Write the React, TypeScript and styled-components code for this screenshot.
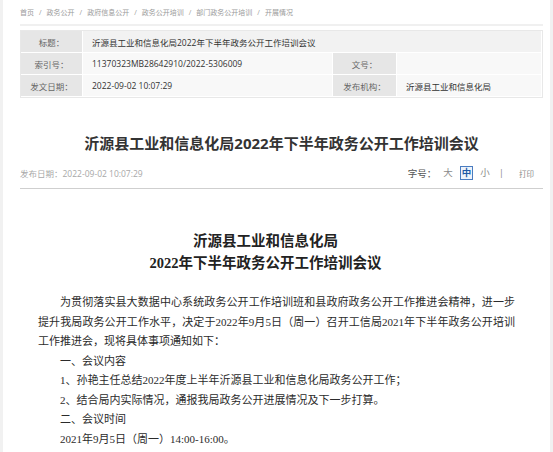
import React from 'react';
import styled, { createGlobalStyle } from 'styled-components';

const GlobalStyle = createGlobalStyle`
  html, body {
    margin: 0;
    padding: 0;
    background: #f1f1f1;
    font-family: 'Open Sans', 'Noto Sans CJK SC', sans-serif;
    color: #333;
  }
`;

const Page = styled.div`
  margin: 0 3px;
  background: #ffffff;
  padding: 0 7px 0 17px;
  height: 452px;
  overflow: hidden;
`;

const Crumbs = styled.nav`
  height: 24px;
  display: flex;
  align-items: center;
  border-bottom: 2px solid #f0f0f0;
  font-size: 7px;
  color: #9a9a9a;
`;

const Sep = styled.span`
  margin: 0 5px;
`;

const InfoTable = styled.div`
  margin-top: 4px;
  display: grid;
  grid-template-columns: 62px 1fr 64px 145px;
  border: 1px solid #e8e8e8;
  font-size: 8.5px;
`;

const Cell = styled.div<{ $label?: boolean; $span?: number; $shade?: boolean }>`
  height: 21px;
  display: flex;
  align-items: center;
  justify-content: ${(p) => (p.$label ? 'center' : 'flex-start')};
  padding: ${(p) => (p.$label ? '0' : '0 9px')};
  grid-column: ${(p) => (p.$span ? `span ${p.$span}` : 'auto')};
  background: ${(p) => (p.$label ? '#e6e6e6' : p.$shade ? '#f2f2f2' : '#f8f8f8')};
  color: ${(p) => (p.$label ? '#666' : '#333')};
  border-right: 1px solid #fff;
  border-bottom: 1px solid #fff;
  white-space: nowrap;
`;

const Headline = styled.h1`
  margin: 35px 0 0;
  text-align: center;
  font-size: 15px;
  line-height: 20px;
  font-weight: 700;
  color: #333;
`;

const MetaRow = styled.div`
  margin-top: 13px;
  padding-bottom: 8px;
  border-bottom: 1px solid #cfcfcf;
  display: flex;
  justify-content: space-between;
  align-items: center;
  height: 14px;
  font-size: 8.5px;
  color: #a8a8a8;
`;

const SizeTools = styled.div`
  display: flex;
  align-items: center;
  gap: 5px;
  padding-right: 9px;
  font-size: 9.5px;
`;

const ToolLabel = styled.span`
  color: #555;
`;

const SizeOpt = styled.span<{ $active?: boolean }>`
  color: ${(p) => (p.$active ? '#1f5aa6' : '#8a8a8a')};
  font-weight: ${(p) => (p.$active ? 700 : 400)};
  border: 1px solid ${(p) => (p.$active ? '#4a7cc0' : 'transparent')};
  background: ${(p) => (p.$active ? '#edf3fb' : 'transparent')};
  padding: 0 1px;
  line-height: 12px;
`;

const Print = styled.span`
  margin-left: 8px;
  font-size: 7.5px;
  color: #8a8a8a;
`;

const Article = styled.div`
  padding: 0 28px 0 18px;
  font-family: 'Liberation Serif', 'Noto Sans CJK SC', serif;
  color: #2b2b2b;
`;

const DocTitle = styled.h2`
  margin: 41px 0 0;
  padding-right: 22px;
  text-align: center;
  font-size: 14.5px;
  line-height: 22px;
  font-weight: 700;
  color: #222;
`;

const Para = styled.p<{ $first?: boolean }>`
  margin: ${(p) => (p.$first ? '19px 0 0' : '0')};
  font-size: 11px;
  line-height: 19.5px;
  text-indent: 22px;
  text-align: justify;
`;

const crumbs = ['首页', '政务公开', '政府信息公开', '政务公开培训', '部门政务公开培训', '开展情况'];

const App: React.FC = () => (
  <>
    <GlobalStyle />
    <Page>
      <Crumbs>
        {crumbs.map((c, i) => (
          <React.Fragment key={c}>
            {i > 0 && <Sep>/</Sep>}
            <span>{c}</span>
          </React.Fragment>
        ))}
      </Crumbs>

      <InfoTable>
        <Cell $label>标题：</Cell>
        <Cell $span={3} $shade>沂源县工业和信息化局2022年下半年政务公开工作培训会议</Cell>
        <Cell $label>索引号：</Cell>
        <Cell>11370323MB28642910/2022-5306009</Cell>
        <Cell $label>文号：</Cell>
        <Cell />
        <Cell $label>发文日期：</Cell>
        <Cell>2022-09-02 10:07:29</Cell>
        <Cell $label>发布机构：</Cell>
        <Cell>沂源县工业和信息化局</Cell>
      </InfoTable>

      <Headline>沂源县工业和信息化局2022年下半年政务公开工作培训会议</Headline>

      <MetaRow>
        <span>发布日期：2022-09-02 10:07:29</span>
        <SizeTools>
          <ToolLabel>字号：</ToolLabel>
          <SizeOpt>大</SizeOpt>
          <SizeOpt $active>中</SizeOpt>
          <SizeOpt>小</SizeOpt>
          <SizeOpt>|</SizeOpt>
          <Print>打印</Print>
        </SizeTools>
      </MetaRow>

      <Article>
        <DocTitle>
          沂源县工业和信息化局
          <br />
          2022年下半年政务公开工作培训会议
        </DocTitle>
        <Para $first>
          为贯彻落实县大数据中心系统政务公开工作培训班和县政府政务公开工作推进会精神，进一步提升我局政务公开工作水平，决定于2022年9月5日（周一）召开工信局2021年下半年政务公开培训工作推进会，现将具体事项通知如下：
        </Para>
        <Para>一、会议内容</Para>
        <Para>1、孙艳主任总结2022年度上半年沂源县工业和信息化局政务公开工作；</Para>
        <Para>2、结合局内实际情况，通报我局政务公开进展情况及下一步打算。</Para>
        <Para>二、会议时间</Para>
        <Para>2021年9月5日（周一）14:00-16:00。</Para>
      </Article>
    </Page>
  </>
);

export default App;
